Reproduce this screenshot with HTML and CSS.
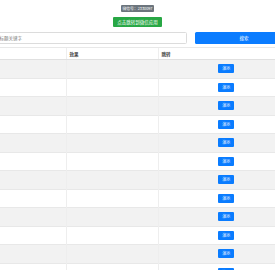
FILE: index.html
```html
<!DOCTYPE html>
<html lang="zh">
<head>
<meta charset="utf-8">
<title>演示列表</title>
<link rel="stylesheet" href="styles.css">
</head>
<body>
<div class="page">
  <div class="top">
    <span class="badge">微信号：2330097</span>
    <a class="btn-green" href="#">点击跳转到微信应用</a>
  </div>
  <div class="search">
    <input class="search-input" type="text" placeholder="请输入标题关键字">
    <button class="btn-search">搜索</button>
  </div>
  <table class="list">
    <thead>
      <tr><th class="c1">标题</th><th class="c2">效果</th><th class="c3">跳转</th></tr>
    </thead>
    <tbody>
      <tr><td></td><td></td><td class="act"><a class="btn-demo" href="#">演示</a></td></tr>
      <tr><td></td><td></td><td class="act"><a class="btn-demo" href="#">演示</a></td></tr>
      <tr><td></td><td></td><td class="act"><a class="btn-demo" href="#">演示</a></td></tr>
      <tr><td></td><td></td><td class="act"><a class="btn-demo" href="#">演示</a></td></tr>
      <tr><td></td><td></td><td class="act"><a class="btn-demo" href="#">演示</a></td></tr>
      <tr><td></td><td></td><td class="act"><a class="btn-demo" href="#">演示</a></td></tr>
      <tr><td></td><td></td><td class="act"><a class="btn-demo" href="#">演示</a></td></tr>
      <tr><td></td><td></td><td class="act"><a class="btn-demo" href="#">演示</a></td></tr>
      <tr><td></td><td></td><td class="act"><a class="btn-demo" href="#">演示</a></td></tr>
      <tr><td></td><td></td><td class="act"><a class="btn-demo" href="#">演示</a></td></tr>
      <tr><td></td><td></td><td class="act"><a class="btn-demo" href="#">演示</a></td></tr>
      <tr><td></td><td></td><td class="act"><a class="btn-demo" href="#">演示</a></td></tr>
    </tbody>
  </table>
</div>
</body>
</html>
```
FILE: styles.css
```css
html, body {
  margin: 0;
  padding: 0;
  background: #fff;
  overflow: hidden;
}
body {
  font-family: "Noto Sans CJK SC", "Noto Sans", sans-serif;
  color: #333;
  font-size: 4.5px;
}
.page {
  margin: 0 -19px;
  width: 313px;
}
.top {
  display: flex;
  flex-direction: column;
  align-items: center;
  padding-top: 5px;
}
.badge {
  display: inline-block;
  background: #6c757d;
  color: #fff;
  font-size: 3.8px;
  line-height: 7px;
  height: 7px;
  padding: 0 2px;
  border-radius: 1px;
  white-space: nowrap;
}
.btn-green {
  margin-top: 5px;
  display: inline-block;
  background: #28a745;
  color: #fff;
  text-decoration: none;
  font-size: 4.5px;
  line-height: 10px;
  height: 10px;
  padding: 0 4px;
  border-radius: 1px;
  white-space: nowrap;
}
.search {
  margin-top: 5px;
  display: grid;
  grid-template-columns: 206px 98px;
  column-gap: 8px;
}
.search-input {
  box-sizing: border-box;
  height: 12px;
  margin: 0;
  border: 1px solid #dcdcdc;
  border-radius: 1.5px;
  padding: 0 4px;
  font-family: inherit;
  font-size: 4.5px;
  outline: none;
}
.search-input::placeholder {
  color: #777;
}
.btn-search {
  box-sizing: border-box;
  height: 12px;
  margin: 0;
  padding: 0;
  border: 0;
  border-radius: 1.5px;
  background: #0a7cff;
  color: #fff;
  font-family: inherit;
  font-size: 4.5px;
}
.list {
  margin-top: 3px;
  width: 313px;
  border-collapse: collapse;
  table-layout: fixed;
}
.list th {
  height: 12px;
  padding: 0 3px;
  text-align: left;
  font-weight: bold;
  font-size: 4.5px;
  color: #444;
  border-top: 1px solid #e8e8e8;
  border-bottom: 1px solid #e0e0e0;
  border-left: 1px solid #eeeeee;
  box-sizing: border-box;
}
.list th:first-child { border-left: 0; }
.c1 { width: 85px; }
.c2 { width: 92px; }
.c3 { width: 136px; }
.list td {
  height: 18.5px;
  padding: 0;
  box-sizing: border-box;
  border-top: 1px solid #e8e8e8;
  border-left: 1px solid #eeeeee;
}
.list td:first-child { border-left: 0; }
.list tbody tr:nth-child(odd) td {
  background: #f2f2f2;
}
.act {
  text-align: center;
  vertical-align: middle;
}
.btn-demo {
  display: inline-block;
  width: 16px;
  height: 9px;
  line-height: 9px;
  background: #0a7cff;
  color: #fff;
  text-decoration: none;
  font-size: 4px;
  border-radius: 1px;
  vertical-align: middle;
}
```
